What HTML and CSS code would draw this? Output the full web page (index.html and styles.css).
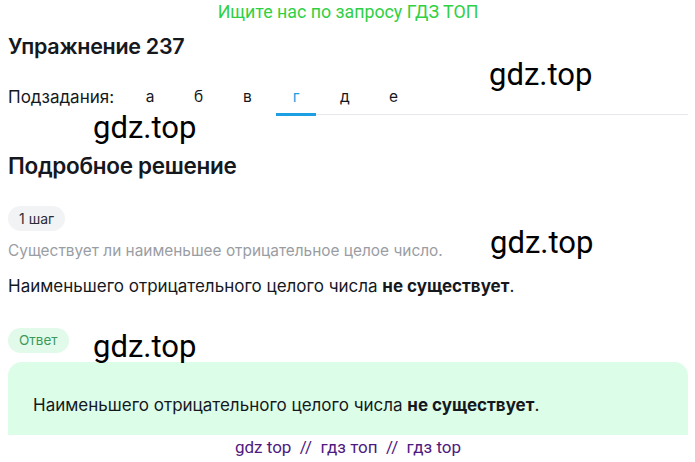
FILE: index.html
```html
<!DOCTYPE html>
<html lang="ru">
<head>
<meta charset="utf-8">
<link rel="stylesheet" href="styles.css">
</head>
<body>
<div class="page">
  <div class="banner">Ищите нас по запросу ГДЗ ТОП</div>
  <h1 class="title">Упражнение 237</h1>
  <div class="subtasks">
    <span class="sub-label">Подзадания:</span>
    <div class="tabs">
      <span class="tab">а</span>
      <span class="tab">б</span>
      <span class="tab">в</span>
      <span class="tab active">г</span>
      <span class="tab">д</span>
      <span class="tab">е</span>
      <span class="tab-fill"></span>
    </div>
  </div>
  <h2 class="title sol">Подробное решение</h2>
  <div class="chip step">1 шаг</div>
  <p class="question">Существует ли наименьшее отрицательное целое число.</p>
  <p class="text">Наименьшего отрицательного целого числа <b>не существует</b>.</p>
  <div class="chip answer">Ответ</div>
  <div class="answer-box">
    <p class="text">Наименьшего отрицательного целого числа <b>не существует</b>.</p>
  </div>
  <div class="footer">gdz top &nbsp;//&nbsp; гдз топ &nbsp;//&nbsp; гдз top</div>

  <span class="wm wm1">gdz.top</span>
  <span class="wm wm2">gdz.top</span>
  <span class="wm wm3">gdz.top</span>
  <span class="wm wm4">gdz.top</span>
</div>
</body>
</html>
```

FILE: styles.css
```css
html, body {
  margin: 0;
  padding: 0;
  background: #ffffff;
}
.page {
  position: relative;
  width: 695px;
  height: 462px;
  overflow: hidden;
  padding: 0 7px 0 8px;
  box-sizing: border-box;
  font-family: Inter, "Noto Sans", sans-serif;
  color: #15181d;
}
.banner {
  font-family: Roboto, sans-serif;
  font-size: 17.8px;
  color: #2fd044;
  text-align: center;
  height: 24px;
  line-height: 24px;
}
.title {
  margin: 0;
  font-size: 22.5px;
  font-weight: 600;
  letter-spacing: -0.3px;
  line-height: 26px;
}
h1.title {
  margin-top: 9px;
  font-size: 21.5px;
}
.subtasks {
  display: flex;
  align-items: stretch;
  margin-top: 24px;
  height: 33px;
}
.sub-label {
  font-size: 17px;
  line-height: 28px;
  width: 122px;
}
.tabs {
  display: flex;
  flex: 1;
}
.tab {
  width: 40px;
  margin-right: 8.7px;
  text-align: center;
  font-size: 15.5px;
  line-height: 28px;
  color: #15181d;
  box-sizing: border-box;
}
.tab.active {
  color: #1d9fe4;
  border-bottom: 3px solid #1d9fe4;
  margin-right: 0;
}
.tab-fill {
  flex: 1;
}
.tab.active ~ .tab,
.tab.active ~ .tab-fill {
  border-bottom: 1px solid #e6e8eb;
  height: 32px;
  box-sizing: border-box;
}
.tab.active ~ .tab {
  margin-right: 0;
  width: 48.7px;
  padding-left: 8.7px;
}
.sol {
  margin-top: 37px;
}
.chip {
  display: inline-block;
  font-size: 14px;
  line-height: 25px;
  padding: 0 11px;
  border-radius: 13px;
}
.step {
  margin-top: 27px;
  background: #f2f3f5;
  color: #2a2d33;
}
.question {
  margin: 9px 0 0;
  font-size: 15.4px;
  line-height: 22px;
  color: #9a9da3;
}
.text {
  margin: 12px 0 0;
  font-size: 17px;
  line-height: 24px;
  color: #15181d;
}
.text b {
  font-weight: 700;
}
.answer {
  display: block;
  width: fit-content;
  margin-top: 30px;
  background: #e2faea;
  color: #3a9a5c;
  font-size: 13.5px;
  padding: 0 11px;
}
.answer-box {
  margin-top: 9px;
  height: 73px;
  background: #dcfde8;
  border-radius: 14px 14px 0 0;
  padding: 0 25px;
  display: flex;
  align-items: center;
}
.answer-box .text {
  margin: 12px 0 0;
}
.footer {
  font-family: Roboto, sans-serif;
  font-size: 17px;
  color: #4e1a7f;
  text-align: center;
  line-height: 24px;
}
.wm {
  position: absolute;
  font-family: Roboto, sans-serif;
  font-size: 31px;
  color: #000;
  line-height: 36px;
}
.wm1 { left: 489px; top: 57px; }
.wm2 { left: 93px; top: 110px; }
.wm3 { left: 490px; top: 225px; }
.wm4 { left: 93px; top: 329px; }
```
